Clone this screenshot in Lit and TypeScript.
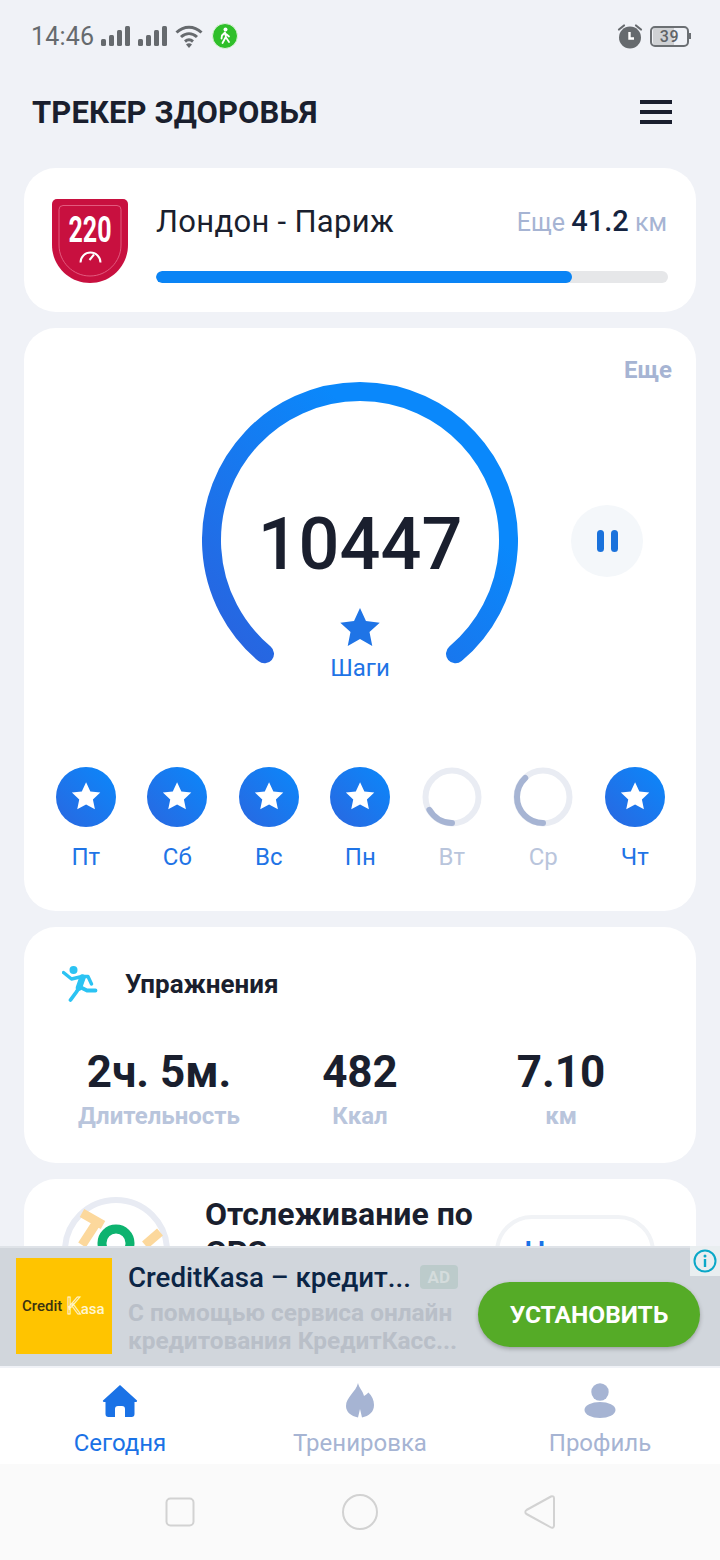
import { LitElement, html, css, svg } from 'lit';
import { customElement } from 'lit/decorators.js';

const STAR = 'M12 1.6l3.2 6.9 7.4.9-5.5 5.1 1.5 7.4L12 18.2l-6.6 3.7 1.5-7.4L1.4 9.4l7.4-.9z';

// days of the week, pct is only used when the goal was not reached
const DAYS = [
  { label: 'Пт', done: true, pct: 0 },
  { label: 'Сб', done: true, pct: 0 },
  { label: 'Вс', done: true, pct: 0 },
  { label: 'Пн', done: true, pct: 0 },
  { label: 'Вт', done: false, pct: 60 / 360 },
  { label: 'Ср', done: false, pct: 136 / 360 },
  { label: 'Чт', done: true, pct: 0 },
];

@customElement('app-root')
export class AppRoot extends LitElement {
  static styles = css`
    :host {
      display: block;
      font-family: Roboto, 'Noto Sans', sans-serif;
      color: #1a1f2e;
    }
    .screen {
      width: 720px;
      height: 1560px;
      display: flex;
      flex-direction: column;
      background: #f0f2f7;
      overflow: hidden;
    }
    .scroll {
      height: 1246px;
      overflow: hidden;
      flex: none;
    }

    /* status bar */
    .status {
      height: 72px;
      padding: 0 31px 0 31px;
      display: flex;
      align-items: center;
      box-sizing: border-box;
      color: #666a6e;
      font-size: 25px;
      letter-spacing: 0.2px;
    }
    .status svg {
      display: block;
      flex: none;
    }
    .status .time {
      margin-right: 7px;
    }
    .status .gap {
      width: 7px;
    }
    .status .wifi {
      margin-left: 7px;
    }
    .status .walk {
      margin-left: 9px;
    }
    .status .grow {
      flex: 1;
    }
    .battery {
      width: 35px;
      height: 17px;
      margin-left: 7px;
      border: 2px solid #6b6f73;
      border-radius: 5px;
      position: relative;
      font-size: 16px;
      font-weight: 500;
      line-height: 17px;
      text-align: center;
      color: #5f6367;
      letter-spacing: 0.6px;
      background: linear-gradient(90deg, #cfd1d4 0 62%, transparent 62%);
      background-clip: content-box;
      padding: 0 1px;
      box-sizing: content-box;
      width: 33px;
    }
    .battery::after {
      content: '';
      position: absolute;
      right: -4px;
      top: 5px;
      width: 2px;
      height: 6px;
      background: #6b6f73;
    }

    .header {
      height: 84px;
      padding: 0 48px 0 32px;
      display: flex;
      align-items: center;
      justify-content: space-between;
      box-sizing: border-box;
      margin-top: -2px;
      margin-bottom: 14px;
    }
    .header h1 {
      margin: 0;
      font-size: 31px;
      font-weight: 700;
      letter-spacing: 0.1px;
    }
    .burger {
      width: 32px;
      display: flex;
      flex-direction: column;
      gap: 6px;
    }
    .burger span {
      height: 4px;
      background: #1a1f2e;
    }

    .card {
      margin: 0 24px 16px;
      background: #fff;
      border-radius: 32px;
    }

    /* route */
    .route {
      height: 144px;
      box-sizing: border-box;
      padding: 31px 28px 0;
      display: flex;
      gap: 28px;
    }
    .route .body {
      flex: 1;
    }
    .route .top {
      height: 44px;
      display: flex;
      align-items: center;
      justify-content: space-between;
    }
    .route .name {
      font-size: 31px;
      letter-spacing: 0.3px;
    }
    .route .left {
      font-size: 25px;
      color: #a6b4d3;
      padding-right: 1px;
    }
    .route .left b {
      font-size: 29px;
      font-weight: 500;
      color: #14233f;
    }
    .track {
      margin-top: 28px;
      height: 12px;
      border-radius: 6px;
      background: #e6e7e9;
      overflow: hidden;
    }
    .fill {
      height: 100%;
      border-radius: 6px;
      background: #0a84f5;
    }

    /* steps */
    .steps {
      height: 583px;
      box-sizing: border-box;
      padding: 29px 24px 0 16px;
    }
    .more {
      height: 25px;
      line-height: 26px;
      text-align: right;
      font-size: 24px;
      font-weight: 700;
      color: #a6b4d3;
    }
    .gauge-row {
      display: grid;
      grid-template-columns: 162px 316px 1fr;
      height: 385px;
    }
    .gauge {
      grid-column: 2;
      position: relative;
      height: 300px;
    }
    .gauge svg {
      display: block;
    }
    .overlay {
      position: absolute;
      inset: 0;
      display: flex;
      flex-direction: column;
      align-items: center;
      padding-top: 123px;
    }
    .count {
      font-size: 72px;
      line-height: 80px;
      font-weight: 500;
    }
    .overlay svg {
      margin-top: 22px;
    }
    .overlay span {
      margin-top: 7px;
      font-size: 24px;
      line-height: 28px;
      color: #1f74e6;
    }
    .pause {
      width: 72px;
      height: 72px;
      margin: 123px 0 0 53px;
      border-radius: 50%;
      background: #f4f7fa;
      display: flex;
      align-items: center;
      justify-content: center;
      gap: 7px;
    }
    .pause i {
      width: 7px;
      height: 22px;
      border-radius: 4px;
      background: #1a72dc;
    }
    .days {
      margin-right: -8px;
      display: grid;
      grid-template-columns: repeat(7, 91.5px);
    }
    .day {
      display: flex;
      flex-direction: column;
      align-items: center;
      font-size: 24px;
      color: #1f74e6;
    }
    .day.off {
      color: #b9c5dc;
    }
    .day svg {
      display: block;
    }
    .day span {
      margin-top: 14px;
      line-height: 32px;
    }

    /* exercises */
    .exercise {
      height: 236px;
      box-sizing: border-box;
      padding: 38px 34px 0 38px;
    }
    .ex-head {
      display: flex;
      align-items: center;
      gap: 27px;
      height: 38px;
      font-size: 26px;
      font-weight: 700;
    }
    .stats {
      margin: 44px 0 0 -3.5px;
      display: grid;
      grid-template-columns: repeat(3, 201px);
      text-align: center;
    }
    .stats b {
      display: block;
      font-size: 44px;
      line-height: 50px;
      font-weight: 700;
    }
    .stats span {
      display: block;
      font-size: 24px;
      line-height: 38px;
      font-weight: 700;
      color: #b9c5dc;
      white-space: nowrap;
    }

    /* gps, cut by the banner */
    .gps {
      height: 160px;
      box-sizing: border-box;
      margin-bottom: 0;
      padding: 18px 41px 0 38px;
      display: flex;
    }
    .gps svg {
      flex: none;
    }
    .gps .text {
      width: 290px;
      margin: -2px 0 0 35px;
      font-size: 32px;
      line-height: 38px;
      font-weight: 700;
    }
    .gps .btn {
      width: 160px;
      height: 74px;
      margin-top: 18px;
      box-sizing: border-box;
      border: 4px solid #f1f3f6;
      border-radius: 37px;
      text-align: center;
      font-size: 30px;
      line-height: 66px;
      font-weight: 500;
      color: #1a72e6;
    }

    /* ad */
    .ad {
      height: 120px;
      flex: none;
      box-sizing: border-box;
      padding: 12px 20px 0 16px;
      border-top: 2px solid #dfe3e8;
      background: #d1d6dc;
      display: flex;
      position: relative;
    }
    .logo {
      width: 96px;
      height: 96px;
      flex: none;
      margin-top: -2px;
      padding-left: 6px;
      box-sizing: border-box;
      background: #ffc400;
      display: flex;
      align-items: center;
      font-size: 15px;
      font-weight: 500;
      color: #3a3210;
      white-space: nowrap;
    }
    .logo em {
      margin-left: 4px;
      font-style: normal;
      color: #fff6d0;
    }
    .logo em u {
      text-decoration: none;
      font-size: 23px;
      font-weight: 400;
      color: transparent;
      -webkit-text-stroke: 1px #fff6d0;
    }
    .ad .copy {
      width: 350px;
      margin-left: 16px;
      flex: none;
    }
    .ad .title {
      display: flex;
      align-items: center;
      height: 32px;
      margin-top: 1px;
      font-size: 27.7px;
      font-weight: 500;
      color: #0b2545;
      white-space: nowrap;
    }
    .ad .tag {
      width: 38px;
      height: 24px;
      margin-left: 9px;
      flex: none;
      border-radius: 4px;
      background: #bccbcb;
      color: #d4dcdc;
      font-size: 17px;
      font-weight: 700;
      line-height: 24px;
      text-align: center;
    }
    .ad p {
      margin: 6px 0 0;
      font-size: 24.4px;
      line-height: 28px;
      font-weight: 700;
      color: #b9bfc8;
      white-space: nowrap;
    }
    .install {
      width: 222px;
      height: 65px;
      flex: none;
      margin-top: 22px;
      border-radius: 33px;
      background: #55ab27;
      box-shadow: 0 2px 4px rgba(0, 0, 0, 0.25);
      color: #fff;
      font-size: 24.5px;
      font-weight: 700;
      line-height: 65px;
      text-align: center;
    }
    .info {
      position: absolute;
      top: -2px;
      right: 0;
      width: 30px;
      height: 30px;
      background: #e9eef0;
      display: flex;
      align-items: center;
      justify-content: center;
    }

    /* tabs */
    .tabs {
      margin-top: 2px;
      height: 96px;
      flex: none;
      background: #fff;
      display: grid;
      grid-template-columns: repeat(3, 1fr);
    }
    .tab {
      display: flex;
      flex-direction: column;
      align-items: center;
      padding-top: 15px;
      box-sizing: border-box;
      font-size: 24px;
      color: #a6b4d3;
    }
    .tab.on {
      color: #1a72e6;
    }
    .tab span {
      margin-top: 9px;
      line-height: 32px;
    }
    .tab svg {
      display: block;
    }

    /* android nav */
    .nav {
      flex: 1;
      background: #fafafa;
      padding: 0 90px;
      display: grid;
      grid-template-columns: repeat(3, 1fr);
      align-items: center;
      justify-items: center;
    }
  `;

  renderDay(d: { label: string; done: boolean; pct: number }, i: number) {
    if (d.done) {
      return html`<div class="day">
        <svg width="60" height="60" viewBox="0 0 60 60">
          <defs>
            <linearGradient id="dg${i}" x1="0" y1="1" x2="1" y2="0">
              <stop offset="0" stop-color="#2a67e0"></stop>
              <stop offset="1" stop-color="#0a88fb"></stop>
            </linearGradient>
          </defs>
          <circle cx="30" cy="30" r="30" fill="url(#dg${i})"></circle>
          <path d=${STAR} transform="translate(14 13) scale(1.34)" fill="#fff"></path>
        </svg>
        <span>${d.label}</span>
      </div>`;
    }
    const c = 2 * Math.PI * 26;
    // arc runs clockwise from the bottom of the ring
    return html`<div class="day off">
      <svg width="60" height="60" viewBox="0 0 60 60">
        <circle cx="30" cy="30" r="26.5" fill="none" stroke="#e9ecf3" stroke-width="6"></circle>
        <circle cx="30" cy="30" r="26" fill="none" stroke="#a6b4d3" stroke-width="6" stroke-linecap="round"
          stroke-dasharray="${c * d.pct} ${c}" transform="rotate(90 30 30)"></circle>
      </svg>
      <span>${d.label}</span>
    </div>`;
  }

  render() {
    return html`
      <div class="screen">
        <div class="scroll">
          <div class="status">
            <span class="time">14:46</span>
            ${this.signal()}
            <span class="gap"></span>
            ${this.signal()}
            <svg class="wifi" width="28" height="24" viewBox="0 0 28 24" fill="none" stroke="#666a6e" stroke-width="3">
              <path d="M1.5 8.5C9 1.5 19 1.5 26.5 8.5"></path>
              <path d="M6 13c5-4.5 11-4.5 16 0"></path>
              <path d="M10 17.5c2.600-2.200 5.400-2.200 8 0"></path>
              <path d="M14 24l-3-3.600c2-1.400 4-1.400 6 0z" fill="#666a6e" stroke="none"></path>
            </svg>
            <svg class="walk" width="26" height="26" viewBox="0 0 26 26">
              <circle cx="13" cy="13" r="12.500" fill="#2fbf2a" stroke="#dff3dc"></circle>
              <circle cx="13.500" cy="6.500" r="2" fill="#fff"></circle>
              <path d="M13 9.500l-3 3-.5 3M13 9.500l1 5 3 4.500M13.500 14.500l-3 5.500M14 11l3 2.500" fill="none" stroke="#fff" stroke-width="1.800" stroke-linecap="round"></path>
            </svg>
            <span class="grow"></span>
            <svg width="26" height="26" viewBox="0 0 26 26">
              <path d="M2 6.500L7 2.500M24 6.500L19 2.500" stroke="#666a6e" stroke-width="2.200" stroke-linecap="round"></path>
              <circle cx="13" cy="14.500" r="11" fill="#666a6e"></circle>
              <path d="M12.500 9v6.500h4.500" fill="none" stroke="#fff" stroke-width="2.400"></path>
            </svg>
            <div class="battery">39</div>
          </div>

          <div class="header">
            <h1>ТРЕКЕР ЗДОРОВЬЯ</h1>
            <div class="burger"><span></span><span></span><span></span></div>
          </div>

          <div class="card route">
            <svg width="76" height="84" viewBox="0 0 76 84" style="flex:none">
              <path d="M5 0h66a5 5 0 0 1 5 5v41c0 21-17 38-38 38S0 67 0 46V5a5 5 0 0 1 5-5z" fill="#c8103f"></path>
              <path d="M11 6.500h54a4 4 0 0 1 4 4V46c0 17-14 31-31 31S7 63 7 46V10.500a4 4 0 0 1 4-4z" fill="none" stroke="#e25a7e" stroke-width="1"></path>
              <text x="38" y="43" text-anchor="middle" font-family="Roboto" font-size="36" font-weight="700" fill="#fff" textLength="43" lengthAdjust="spacingAndGlyphs">220</text>
              <path d="M28.500 63.500a10 10 0 0 1 20 0" fill="none" stroke="#fff" stroke-width="2"></path>
              <path d="M37.500 61l4.500-5.500" stroke="#fff" stroke-width="2"></path>
            </svg>
            <div class="body">
              <div class="top">
                <span class="name">Лондон - Париж</span>
                <span class="left">Еще <b>41.2</b> км</span>
              </div>
              <div class="track"><div class="fill" style="width:${(416 / 512) * 100}%"></div></div>
            </div>
          </div>

          <div class="card steps">
            <div class="more">Еще</div>
            <div class="gauge-row">
              <div class="gauge">
                <svg width="316" height="300" viewBox="0 0 316 300">
                  <defs>
                    <linearGradient id="arc" x1="0" y1="1" x2="1" y2="0">
                      <stop offset="0" stop-color="#2a62de"></stop>
                      <stop offset="0.7" stop-color="#0a88fb"></stop>
                    </linearGradient>
                  </defs>
                  <path d="M62.500 271.800A148.500 148.500 0 1 1 253.500 271.800" fill="none" stroke="url(#arc)" stroke-width="19" stroke-linecap="round"></path>
                </svg>
                <div class="overlay">
                  <div class="count">10447</div>
                  <svg width="42" height="40" viewBox="1 1 22 21.500"><path d=${STAR} fill="#1f74e6"></path></svg>
                  <span>Шаги</span>
                </div>
              </div>
              <div class="pause"><i></i><i></i></div>
            </div>
            <div class="days">${DAYS.map((d, i) => this.renderDay(d, i))}</div>
          </div>

          <div class="card exercise">
            <div class="ex-head">
              <svg width="36" height="36" viewBox="0 0 36 36" style="flex:none">
                <circle cx="11.500" cy="4" r="4" fill="#2bc3f3"></circle>
                <path d="M1.500 6.500L9.500 13 20 10.500h6l3.500 7.500" fill="none" stroke="#2bc3f3" stroke-width="3.400" stroke-linecap="round" stroke-linejoin="round"></path>
                <path d="M20.500 11.500L17 21.500" fill="none" stroke="#2bc3f3" stroke-width="6.500" stroke-linecap="round"></path>
                <path d="M18 21l7 3.500h8.500M17 22l-3 4.500-5.500 7.500" fill="none" stroke="#2bc3f3" stroke-width="3.800" stroke-linecap="round" stroke-linejoin="round"></path>
              </svg>
              Упражнения
            </div>
            <div class="stats">
              <div><b>2ч. 5м.</b><span>Длительность</span></div>
              <div><b>482</b><span>Ккал</span></div>
              <div><b>7.10</b><span>км</span></div>
            </div>
          </div>

          <div class="card gps">
            <svg width="108" height="108" viewBox="0 0 108 108">
              <circle cx="54" cy="54" r="51" fill="#fff" stroke="#e8ebf3" stroke-width="6"></circle>
              <path d="M20 16l21 12M33 28L20 48M98 35L83 48" fill="none" stroke="#fcd89c" stroke-width="9"></path>
              <circle cx="54" cy="46" r="14" fill="none" stroke="#0db36f" stroke-width="9"></circle>
            </svg>
            <div class="text">Отслеживание по GPS</div>
            <div class="btn">Начать</div>
          </div>
        </div>

        <div class="ad">
          <div class="logo">Credit<em><u>K</u>asa</em></div>
          <div class="copy">
            <div class="title">CreditKasa – кредит...<span class="tag">AD</span></div>
            <p>С помощью сервиса онлайн<br />кредитования КредитКасс...</p>
          </div>
          <div class="install">УСТАНОВИТЬ</div>
          <div class="info">
            <svg width="24" height="24" viewBox="0 0 24 24">
              <circle cx="12" cy="12" r="10.500" fill="none" stroke="#0aa8c8" stroke-width="2"></circle>
              <circle cx="12" cy="7" r="1.500" fill="#0aa8c8"></circle>
              <rect x="10.800" y="10" width="2.400" height="8" fill="#0aa8c8"></rect>
            </svg>
          </div>
        </div>

        <div class="tabs">
          <div class="tab on">
            <svg width="36" height="35" viewBox="0 -2 36 35">
              <path d="M18 0l17 15.500a1 1 0 0 1-1 1.500h-1.500v12a3 3 0 0 1-3 3H23v-8a3 3 0 0 0-3-3h-4a3 3 0 0 0-3 3v8H6.500a3 3 0 0 1-3-3V17H2a1 1 0 0 1-1-1.500z" fill="#1a72e6"></path>
            </svg>
            <span>Сегодня</span>
          </div>
          <div class="tab">
            <svg width="28" height="35" viewBox="0 0 28 35">
              <path d="M12 0c1 5 5 8 6 13 1.500-1 3-2 4.500-3.500C26 13 28 17 28 22c0 7-5 11-12 12.500L14 26l-2 8.500C5 33 0 29 0 23 0 14 10 9 12 0z" fill="#a6b4d3"></path>
            </svg>
            <span>Тренировка</span>
          </div>
          <div class="tab">
            <svg width="32" height="35" viewBox="0 0 32 35">
              <circle cx="16" cy="9" r="8.700" fill="#a6b4d3"></circle>
              <ellipse cx="16" cy="27" rx="15.500" ry="8" fill="#a6b4d3"></ellipse>
            </svg>
            <span>Профиль</span>
          </div>
        </div>

        <div class="nav">
          <svg width="30" height="30" viewBox="0 0 30 30"><rect x="1.500" y="1.500" width="27" height="27" rx="4" fill="none" stroke="#d2d2d2" stroke-width="2"></rect></svg>
          <svg width="36" height="36" viewBox="0 0 36 36"><circle cx="18" cy="18" r="17" fill="none" stroke="#d2d2d2" stroke-width="2"></circle></svg>
          <svg width="32" height="34" viewBox="0 0 32 34"><path d="M2.500 15L27 1.500a2 2 0 0 1 3 1.700v27.600a2 2 0 0 1-3 1.700L2.500 19a2.300 2.300 0 0 1 0-4z" fill="none" stroke="#d2d2d2" stroke-width="2"></path></svg>
        </div>
      </div>
    `;
  }

  signal() {
    return svg`<svg width="30" height="20" viewBox="0 0 30 20" fill="#666a6e">
      <rect x="0" y="13" width="5" height="7" rx="1.500"></rect>
      <rect x="8" y="9" width="5" height="11" rx="1.500"></rect>
      <rect x="16" y="4" width="5" height="16" rx="1.500"></rect>
      <rect x="24" y="0" width="5" height="20" rx="1.500"></rect>
    </svg>`;
  }
}
